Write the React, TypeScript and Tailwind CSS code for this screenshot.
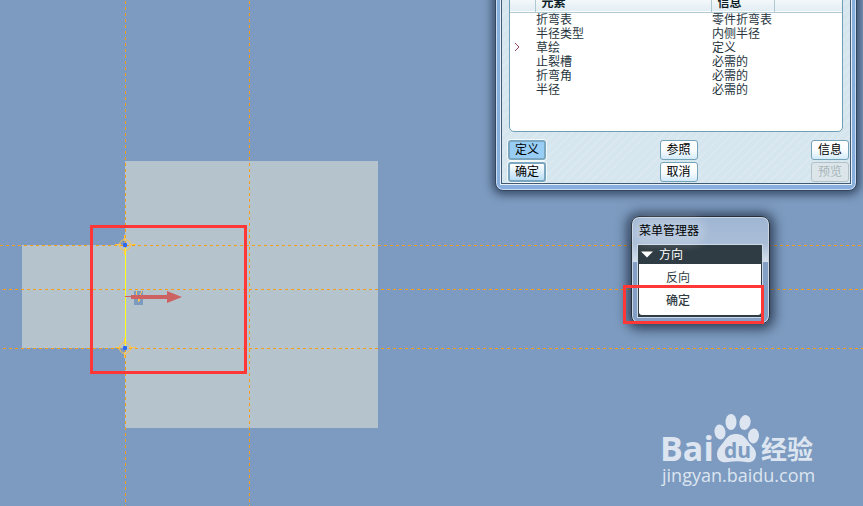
import type { ReactNode } from 'react'
import clsx from 'clsx'

const elements = [
  { name: '折弯表', info: '零件折弯表' },
  { name: '半径类型', info: '内侧半径' },
  { name: '草绘', info: '定义', current: true },
  { name: '止裂槽', info: '必需的' },
  { name: '折弯角', info: '必需的' },
  { name: '半径', info: '必需的' },
]

function DialogButton({ children, focused, pressed, disabled }: {
  children: ReactNode
  focused?: boolean
  pressed?: boolean
  disabled?: boolean
}) {
  return (
    <button
      type="button"
      disabled={disabled}
      className={clsx(
        'flex h-5 w-[38px] items-center justify-center rounded-[3px] text-xs leading-4',
        focused || pressed ? 'border-2 border-[#7aa6bf] shadow-[0_0_0_1px_#f3f8fb]' : 'border',
        !focused && !pressed && !disabled && 'border-[#74a3b8]',
        pressed && 'bg-[#98cef6]',
        focused && 'bg-linear-to-b from-white to-[#b9def7]',
        disabled && 'border-[#b3c2c8] bg-[#dce6ea] text-[#a9b5ba]',
        !pressed && !focused && !disabled && 'bg-linear-to-b from-white via-[#fafdff] to-[#d3eafa]',
      )}
    >
      {children}
    </button>
  )
}

function ElementDialog() {
  return (
    <section className="absolute -top-[9px] left-[495px] w-[362px] rounded-b-lg border border-[#33475f] bg-[#87aedd] px-[5px] pb-[6px] shadow-[0_1px_9px_3px_rgba(25,40,65,0.65),inset_0_0_0_1px_#c8dcf3]">
      <div className="border border-t-0 border-[#415a74] bg-[repeating-linear-gradient(135deg,#d6e6ee_0px,#d6e6ee_4px,#dde9f0_5px,#dde9f0_6px)] pr-px pb-px pl-[6px] shadow-[0_0_0_1px_#e8f1f8]">
        <div className="mr-[6px] ml-px h-[140px] overflow-hidden rounded-b-[5px] border border-[#6e9fb5] bg-white">
          <table className="w-full table-fixed border-collapse text-left text-xs leading-[14px] text-[#26343d]">
            <colgroup>
              <col className="w-[25px]" />
              <col className="w-[176px]" />
              <col className="w-[63px]" />
              <col />
            </colgroup>
            <thead>
              <tr className="h-[19px] border-b border-[#b0c8d2] bg-linear-to-b from-white to-[#e2edf4] text-[#0c1d26]">
                <th className="border-r border-[#b0c8d2] p-0" />
                <th className="border-r border-[#b0c8d2] p-0 pt-[2px] pl-[6px] font-bold">元素</th>
                <th className="border-r border-[#b0c8d2] p-0 pt-[2px] pl-[6px] font-bold">信息</th>
                <th className="p-0" />
              </tr>
            </thead>
            <tbody>
              {elements.map((row) => (
                <tr key={row.name} className="h-[14px]">
                  <td className="p-0 pl-1">
                    {row.current && (
                      <svg className="block" width="8" height="10" viewBox="0 0 8 10">
                        <path d="M1 0l4 4-4 4" fill="none" stroke="#97445b" />
                      </svg>
                    )}
                  </td>
                  <td className="p-0 pl-px">{row.name}</td>
                  <td className="p-0 pl-px whitespace-nowrap">{row.info}</td>
                  <td className="p-0" />
                </tr>
              ))}
            </tbody>
          </table>
        </div>
        <div className="mt-2 flex justify-between">
          <div className="flex flex-col gap-[2px]">
            <DialogButton pressed>定义</DialogButton>
            <DialogButton focused>确定</DialogButton>
          </div>
          <div className="flex flex-col gap-[2px]">
            <DialogButton>参照</DialogButton>
            <DialogButton>取消</DialogButton>
          </div>
          <div className="flex flex-col gap-[2px]">
            <DialogButton>信息</DialogButton>
            <DialogButton disabled>预览</DialogButton>
          </div>
        </div>
      </div>
    </section>
  )
}

function MenuManager() {
  return (
    <section className="absolute top-[216px] left-[631px] w-[139px] rounded-lg border border-[#28313a] bg-[linear-gradient(#9fb6d3_0%,#a9bdd7_25%,#d5e0ec_42%,#839fc4_43%,#839fc4_100%)] pr-[6px] pb-[5px] pl-[5px] text-xs shadow-[0_1px_12px_4px_rgba(20,32,52,0.75),inset_0_0_0_1px_#c8d5e6]">
      <h2 className="flex h-[27px] items-center pl-[2px] text-black">
        <span className="rounded-full bg-white/20 shadow-[0_0_8px_6px_rgba(255,255,255,0.2)]">菜单管理器</span>
      </h2>
      <div className="border border-[#cbd9e8] bg-[#303c43]">
        <button type="button" className="flex h-[19px] w-full items-center gap-[6px] pl-[3px] text-white">
          <svg width="12" height="7" viewBox="0 0 12 7">
            <path d="M0 0.5h12L6 6.5z" fill="white" />
          </svg>
          方向
        </button>
        <div className="mx-px mb-[2px] rounded-b-[3px] bg-white pt-[2px] pb-[3px] text-[#303c43]">
          <button type="button" className="flex h-[23px] w-full items-center pl-[27px]">反向</button>
          <button type="button" className="flex h-[23px] w-full items-center pl-[27px] font-medium">确定</button>
        </div>
      </div>
    </section>
  )
}

function Handle({ x, y }: { x: number; y: number }) {
  return (
    <g transform={`translate(${x} ${y})`}>
      <circle r="5.5" fill="none" stroke="#ffc44d" />
      <path d="M-10-.5h6M4-.5h7M-.5-10v6M-.5 4v6" stroke="#ffc44d" />
      <rect x="-2" y="-2" width="4" height="4" rx="1" fill="#2f68ee" />
    </g>
  )
}

function Sketch() {
  return (
    <svg className="absolute inset-0 h-full w-full" aria-hidden="true">
      <path d="M125 161h253v267H125zM22 245h103v103H22z" fill="#b4c3cc" />
      <g stroke="#f99d12" strokeDasharray="3 3">
        <line x1="0" y1="245.5" x2="100%" y2="245.5" />
        <line x1="3" y1="289.5" x2="100%" y2="289.5" />
        <line x1="3" y1="348.5" x2="100%" y2="348.5" />
        <line x1="125.5" y1="1" x2="125.5" y2="100%" />
        <line x1="249.5" y1="1" x2="249.5" y2="100%" />
      </g>
      <line x1="125.5" y1="248" x2="125.5" y2="346" stroke="#ffff14" />
      <rect x="134" y="291" width="9" height="14" fill="#7d9bc0" />
      <path d="M136.500 291v4M141.500 291v2M140.500 293v2M138.500 299v3M139.500 299v2" stroke="#ffc44d" />
      <path d="M125 296h6v-1h36v-4l15 6-15 6v-4h-36v-2h-6z" fill="#cc6262" />
      <Handle x={125} y={245} />
      <Handle x={125} y={348} />
    </svg>
  )
}

function Watermark() {
  return (
    <svg
      className="absolute top-[410px] left-[658px]"
      width="165"
      height="80"
      viewBox="0 0 165 80"
      fill="#dce5f0"
      fontFamily="'Open Sans', 'Noto Sans', sans-serif"
    >
      <text x="2" y="51" fontSize="34" fontWeight="700">Bai</text>
      <ellipse cx="62" cy="22" rx="5.500" ry="7.500" transform="rotate(-8 62 22)" />
      <ellipse cx="73" cy="12" rx="5.500" ry="8" />
      <ellipse cx="87" cy="12.500" rx="5.500" ry="7.500" transform="rotate(12 87 12.500)" />
      <ellipse cx="95.500" cy="26" rx="5.500" ry="7.500" transform="rotate(6 95.500 26)" />
      <path d="M78 24c5 0 8 2 11 6 3 5 9 8 9 14 0 7-5 9-10 8-6-1-12-1-18 0-6 1-11-1-11-8 0-6 5-9 8-14 3-4 6-6 11-6z" />
      <text x="66" y="48" fontSize="21" fontWeight="700" fill="#7d9bc0">du</text>
      <text
        x="103"
        y="49"
        fontSize="26"
        fontWeight="700"
        fontFamily="'Noto Sans CJK SC', sans-serif"
      >
        经验
      </text>
      <text x="4" y="72" fontSize="18" fontWeight="500">jingyan.baidu.com</text>
    </svg>
  )
}

export default function App() {
  return (
    <main className="relative min-h-screen overflow-hidden bg-[#7d9bc0] font-['Liberation_Sans','Noto_Sans_CJK_SC',sans-serif]">
      <Sketch />
      <ElementDialog />
      <MenuManager />
      <Watermark />
      <div className="pointer-events-none absolute top-[225px] left-[90px] h-[149px] w-[157px] border-3 border-[#ff3737]" />
      <div className="pointer-events-none absolute top-[285px] left-[623px] h-[39px] w-[141px] border-3 border-[#ff3737]" />
    </main>
  )
}
